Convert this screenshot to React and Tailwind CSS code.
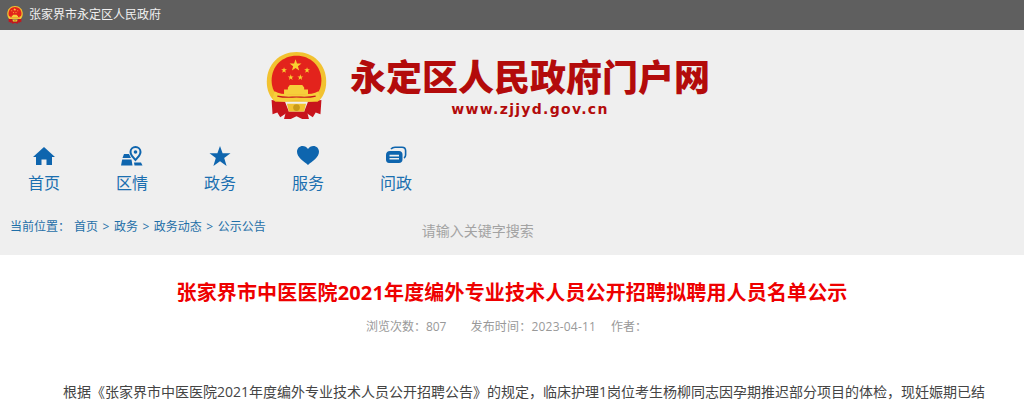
import React from "react";

const FONT = "font-['Open_Sans','Noto_Sans_CJK_SC',sans-serif]";

// National emblem, drawn on a 64x72 box
function Emblem({ className }) {
  const star = (cx, cy, r) => {
    const pts = [];
    for (let i = 0; i < 10; i++) {
      const rad = i % 2 === 0 ? r : r * 0.4;
      const a = (Math.PI / 5) * i - Math.PI / 2;
      pts.push(`${(cx + rad * Math.cos(a)).toFixed(2)},${(cy + rad * Math.sin(a)).toFixed(2)}`);
    }
    return pts.join(" ");
  };
  return (
    <svg viewBox="0 0 64 72" className={className}>
      <path d="M6 50 L7 65 L12 63 L15 68 L24 62 L20 52 Z" fill="#c8141c" />
      <path d="M58 50 L57 65 L52 63 L49 68 L40 62 L44 52 Z" fill="#c8141c" />
      <path d="M21 62 H43 L45 70 H38 L32 67 L26 70 H19 Z" fill="#c8141c" />
      <path d="M32 0 C50 0 63 13 63 31 C63 40 60 47 54 52 H10 C4 47 1 40 1 31 C1 13 14 0 32 0 Z" fill="#f2c230" />
      <path d="M32 4 C47 4 58 15 58 30 C58 36 56 41 53 44 H11 C8 41 6 36 6 30 C6 15 17 4 32 4 Z" fill="#e3231c" />
      <polygon points={star(31, 14, 6.5)} fill="#f8d030" />
      <polygon points={star(19, 19, 3.2)} fill="#f8d030" />
      <polygon points={star(43, 19, 3.2)} fill="#f8d030" />
      <polygon points={star(26, 26.5, 3.2)} fill="#f8d030" />
      <polygon points={star(36, 26.5, 3.2)} fill="#f8d030" />
      <path d="M23 37 L25 34.5 H38 L40 37 V39 H44 V44 H19 V39 H23 Z" fill="#f6cf3a" />
      <path d="M9 41 C16 45 24 44 32 44 C40 44 48 45 55 41 L57 49 C48 54 40 50 32 50 C24 50 16 54 7 49 Z" fill="#f6cf3a" />
      <path d="M12 46 C20 48 26 47 32 47 C38 47 44 48 52 46" fill="none" stroke="#c8141c" strokeWidth="1.2" />
      <path d="M22 54 H42 L40 62 H24 Z" fill="#f2c230" />
      <circle cx="32" cy="58" r="3.5" fill="#c99a18" />
    </svg>
  );
}

function HomeIcon() {
  return (
    <svg viewBox="0 0 22 20" className="h-[20px] w-[22px]" fill="#0e65ae">
      <path d="M11 1 L22 11 H19 V19 H13.5 V13.5 H8.5 V19 H3 V11 H0 Z" />
    </svg>
  );
}

function MapIcon() {
  return (
    <svg viewBox="0 0 22 20" className="h-[20px] w-[22px]" fill="#0e65ae">
      <path fillRule="evenodd" d="M14.5 0 A6 6 0 0 1 20.5 6 C20.5 9.5 16.5 13 14.5 15.5 C12.5 13 8.5 9.5 8.5 6 A6 6 0 0 1 14.5 0 Z M14.5 2 A4 4 0 0 0 10.5 6 C10.5 8.2 13 10.8 14.5 12.6 C16 10.8 18.5 8.2 18.5 6 A4 4 0 0 0 14.5 2 Z" />
      <circle cx="14.5" cy="6" r="1.8" />
      <path d="M3 8 H8 L10 12 H1.5 Z" />
      <path d="M1.2 13.5 H10.5 L11.5 19.5 H0 Z" />
      <path d="M13 16.5 H20 L21.5 19.5 H13.5 Z" />
    </svg>
  );
}

function StarIcon() {
  return (
    <svg viewBox="0 0 22 20" className="h-[20px] w-[22px]" fill="#0e65ae">
      <path d="M11 0 L13.6 7.3 H21.5 L15.2 12 L17.6 20 L11 15.2 L4.4 20 L6.8 12 L0.5 7.3 H8.4 Z" />
    </svg>
  );
}

function HeartIcon() {
  return (
    <svg viewBox="0 0 22 20" className="h-[20px] w-[22px]" fill="#0e65ae">
      <path d="M11 19 C7 15.5 0 11.5 0 5.8 C0 2.4 2.6 0 5.6 0 C7.8 0 9.8 1.2 11 3 C12.2 1.2 14.2 0 16.4 0 C19.4 0 22 2.4 22 5.8 C22 11.5 15 15.5 11 19 Z" />
    </svg>
  );
}

function ChatIcon() {
  return (
    <svg viewBox="0 0 22 20" className="h-[20px] w-[22px]">
      <path d="M6 3 C7 1.8 8 1.2 10 1.2 H17 C19.2 1.2 20.6 2.6 20.6 4.8 V9 C20.6 10.4 20 11.4 19 12" fill="none" stroke="#0e65ae" strokeWidth="1.6" />
      <path fillRule="evenodd" d="M5 5 H14 C16.2 5 17.5 6.4 17.5 8.5 V13.5 C17.5 15.6 16.2 17 14 17 H4 C2 17 1 15.6 1 13.5 V9 C1 6.6 2.6 5 5 5 Z M4.5 8.8 V10.4 H14 V8.8 Z M4.5 12 V13.6 H14 V12 Z" fill="#0e65ae" />
    </svg>
  );
}

const navItems = [
  { label: "首页", icon: <HomeIcon /> },
  { label: "区情", icon: <MapIcon /> },
  { label: "政务", icon: <StarIcon /> },
  { label: "服务", icon: <HeartIcon /> },
  { label: "问政", icon: <ChatIcon /> },
];

const crumbs = ["首页", "政务", "政务动态", "公示公告"];

export default function App() {
  return (
    <div className={`h-[400px] w-[1024px] overflow-hidden bg-white ${FONT}`}>
      {/* Top bar */}
      <div className="flex h-[30px] items-center bg-[#5f5f5f] pl-[7px]">
        <Emblem className="h-[18px] w-[16px]" />
        <span className="ml-[6px] text-[12px] text-[#f0f0f0]">张家界市永定区人民政府</span>
      </div>

      {/* Header */}
      <div className="h-[225px] bg-[#efefef]">
        <div className="flex pl-[265px] pt-[22px]">
          <Emblem className="h-[69px] w-[63px]" />
          <div className="ml-[22px] flex flex-col items-center">
            <div className="mt-[6px] text-[36px] font-black leading-[40px] text-[#b30b0b]">永定区人民政府门户网</div>
            <div className="mt-[3px] font-['DejaVu_Sans',sans-serif] text-[14px] font-bold leading-[16px] tracking-[1.3px] text-[#b30b0b]">www.zjjyd.gov.cn</div>
          </div>
        </div>

        <div className="mt-[25px] flex">
          {navItems.map((item) => (
            <div key={item.label} className="flex w-[88px] flex-col items-center">
              {item.icon}
              <span className="mt-[5px] text-[16px] leading-[24px] text-[#1b6fb0]">{item.label}</span>
            </div>
          ))}
        </div>

        <div className="mt-[22px] flex items-start pl-[10px]">
          <div className="flex text-[12px] leading-[20px] text-[#1f6fa8]">
            <span className="w-[64px]">当前位置：</span>
            {crumbs.map((c, i) => (
              <span key={c}>
                {i > 0 && <span className="mx-[4.5px]">&gt;</span>}
                {c}
              </span>
            ))}
          </div>
          <span className="ml-[156px] mt-[4px] text-[14px] leading-[20px] text-[#a3a3a3]">请输入关键字搜索</span>
        </div>
      </div>

      {/* Article */}
      <div className="pt-[24px]">
        <h1 className="text-center text-[20px] font-bold leading-[28px] tracking-[0.15px] text-[#ee0000]">
          张家界市中医医院2021年度编外专业技术人员公开招聘拟聘用人员名单公示
        </h1>
        <div className="mt-[10px] flex justify-center pr-[11px] text-[12px] leading-[20px] text-[#999999]">
          <span>浏览次数：807</span>
          <span className="ml-[24px] tracking-[0.2px]">发布时间：2023-04-11</span>
          <span className="ml-[15px]">作者：</span>
        </div>
        <p className="mt-[43px] whitespace-nowrap pl-[63px] text-[14px] leading-[24px] text-[#444444]">
          根据《张家界市中医医院2021年度编外专业技术人员公开招聘公告》的规定，临床护理1岗位考生杨柳同志因孕期推迟部分项目的体检，现妊娠期已结
        </p>
      </div>
    </div>
  );
}
